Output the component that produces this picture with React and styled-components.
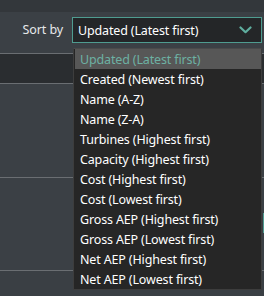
import React from "react";
import styled, { createGlobalStyle } from "styled-components";

const GlobalStyle = createGlobalStyle`
  html, body {
    margin: 0;
    padding: 0;
    background: #3b4045;
    font-family: "Noto Sans", "Open Sans", sans-serif;
  }
`;

const options = [
  "Updated (Latest first)",
  "Created (Newest first)",
  "Name (A-Z)",
  "Name (Z-A)",
  "Turbines (Highest first)",
  "Capacity (Highest first)",
  "Cost (Highest first)",
  "Cost (Lowest first)",
  "Gross AEP (Highest first)",
  "Gross AEP (Lowest first)",
  "Net AEP (Highest first)",
  "Net AEP (Lowest first)",
];

function Chevron() {
  return (
    <svg width="13" height="8" viewBox="0 0 13 8">
      <path
        d="M1.5 1.5 L6.5 6.2 L11.5 1.5"
        fill="none"
        stroke="#5fae9f"
        strokeWidth="2.2"
        strokeLinecap="round"
        strokeLinejoin="round"
      />
    </svg>
  );
}

export default function App() {
  const selected = 0;
  return (
    <Page>
      <GlobalStyle />
      <TopStrip />
      <Toolbar>
        <Label>Sort by</Label>
        <SelectWrap>
          <Select>
            <span>{options[selected]}</span>
            <Chevron />
          </Select>
          <Menu>
            {options.map((o, i) => (
              <Item key={o} active={i === selected}>
                {o}
              </Item>
            ))}
          </Menu>
        </SelectWrap>
      </Toolbar>
      <Section dark height={29} />
      <Section height={93} />
      <Section height={92} />
      <Footer>
        <ScrollThumb />
      </Footer>
    </Page>
  );
}

const Page = styled.div`
  width: 264px;
  height: 296px;
  overflow: hidden;
  position: relative;
  background: #3b4045;
`;

const TopStrip = styled.div`
  height: 12px;
  background: #33373b;
`;

const Toolbar = styled.div`
  height: 42px;
  display: flex;
  align-items: flex-start;
  justify-content: flex-end;
  padding: 5px 2px 0 0;
  box-sizing: border-box;
  background: #3b4045;
  border-bottom: 1px solid #6a6e72;
  gap: 9px;
`;

const Label = styled.span`
  color: #e6e8ea;
  font-size: 12.5px;
  letter-spacing: -0.1px;
  line-height: 26px;
`;

const SelectWrap = styled.div`
  position: relative;
  z-index: 2;
`;

const Select = styled.div`
  width: 190px;
  height: 26px;
  box-sizing: border-box;
  border: 1px solid #4f9c90;
  background: #242628;
  color: #ffffff;
  font-size: 12.5px;
  letter-spacing: -0.15px;
  display: flex;
  align-items: center;
  justify-content: space-between;
  padding: 0 9px 0 5px;
`;

const Menu = styled.div`
  position: absolute;
  top: 31px;
  left: 1px;
  width: 189px;
  box-sizing: border-box;
  background: #262626;
  border: 1px solid #3d3d3d;
  border-top-color: #4a4a4a;
  padding: 0 0 0 1px;
`;

const Item = styled.div`
  height: 20px;
  box-sizing: border-box;
  padding: 1px 0 0 5px;
  line-height: 20px;
  font-size: 12.5px;
  letter-spacing: -0.15px;
  color: ${(p) => (p.active ? "#6db1a3" : "#ffffff")};
  background: ${(p) => (p.active ? "#575757" : "transparent")};
  white-space: nowrap;
`;

const Section = styled.div`
  height: ${(p) => p.height}px;
  background: ${(p) => (p.dark ? "#2a2d30" : "#3b4045")};
  border-bottom: 1px solid #6a6e72;
`;

const Footer = styled.div`
  height: 30px;
  background: #3a3f44;
  position: relative;
`;

const ScrollThumb = styled.div`
  position: absolute;
  right: 0;
  top: -58px;
  width: 1px;
  height: 20px;
  background: #4f9c90;
`;
